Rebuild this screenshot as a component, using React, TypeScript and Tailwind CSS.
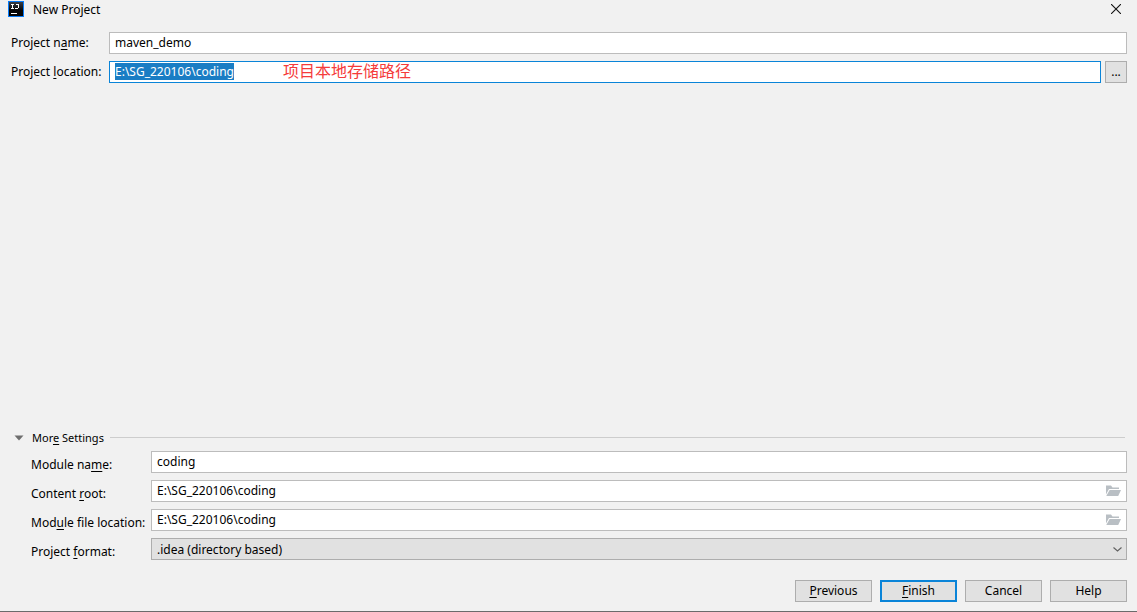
import { useEffect, useRef, useState } from "react";
import type { ReactNode } from "react";

const DEFAULT_PATH = "E:\\SG_220106\\coding";

function Mnemonic({ children }: { children: ReactNode }) {
  return <span className="underline underline-offset-2">{children}</span>;
}

function AppLogo() {
  return (
    <svg className="w-4 h-4" viewBox="0 0 16 16" shapeRendering="crispEdges">
      <defs>
        <linearGradient id="logo" x1="0" y1="0" x2="0" y2="1">
          <stop offset="0" stopColor="#3b3f45" />
          <stop offset="0.6" stopColor="#050505" />
        </linearGradient>
      </defs>
      <rect width="16" height="16" fill="#087cfa" />
      <rect x="1" y="1" width="14" height="14" fill="url(#logo)" />
      <path
        d="M3 3.5h3M4.5 3v5M3 7.5h3M8 3.5h3M10.5 3v4M7 7.5h3M3 12.5h6"
        fill="none"
        stroke="#ffffff"
        strokeWidth="1"
      />
    </svg>
  );
}

function FolderIcon() {
  return (
    <svg className="w-4 h-4" viewBox="0 0 16 16" fill="#b9bfc4">
      <path d="M1 2.5h5l1.5 2H14V6H4L1 11.5z" />
      <path d="M4.6 7H16l-2.8 6H1.3z" />
    </svg>
  );
}

interface PathFieldProps {
  id: string;
  value: string;
  onChange: (value: string) => void;
}

function PathField({ id, value, onChange }: PathFieldProps) {
  return (
    <div className="flex h-[22px] items-center border border-[#bcbcbc] bg-white pr-[5px]">
      <input
        id={id}
        value={value}
        onChange={(e) => onChange(e.target.value)}
        className="h-full min-w-0 flex-1 bg-transparent px-[5px] pb-px outline-none"
      />
      <button type="button" aria-label="Browse" className="flex-shrink-0">
        <FolderIcon />
      </button>
    </div>
  );
}

export default function App() {
  const [name, setName] = useState("maven_demo");
  const [location, setLocation] = useState(DEFAULT_PATH);
  const [moduleName, setModuleName] = useState("coding");
  const [contentRoot, setContentRoot] = useState(DEFAULT_PATH);
  const [moduleFile, setModuleFile] = useState(DEFAULT_PATH);
  const [open, setOpen] = useState(true);
  const locationRef = useRef<HTMLInputElement>(null);

  useEffect(() => {
    locationRef.current?.focus();
    locationRef.current?.select();
  }, []);

  const buttonClass = "h-[22px] w-[77px] border border-[#adadad] bg-[#e1e1e1] leading-4";

  return (
    <div className="flex min-h-screen flex-col border-b border-[#6b6b6b] bg-[#f1f1f1] font-['Noto_Sans','Noto_Sans_CJK_SC',sans-serif] text-[12px] leading-[17px] text-black">
      {/* Title bar */}
      <header className="flex h-[18px] items-center pl-2 pr-4">
        <AppLogo />
        <h1 className="ml-[9px] flex-1">New Project</h1>
        <button type="button" aria-label="Close">
          <svg className="h-[10px] w-[10px]" viewBox="0 0 10 10" stroke="#111111" strokeWidth="1.1">
            <path d="M0 0l10 10M10 0L0 10" />
          </svg>
        </button>
      </header>

      {/* Project fields */}
      <div className="mt-[14px] grid grid-cols-[98px_minmax(0,1fr)] items-center gap-y-[7px] pl-[11px] pr-[10px]">
        <label htmlFor="name" className="pb-px">
          Project n<Mnemonic>a</Mnemonic>me:
        </label>
        <input
          id="name"
          value={name}
          onChange={(e) => setName(e.target.value)}
          className="h-[22px] w-full border border-[#bcbcbc] bg-white px-[5px] pb-px outline-none"
        />
        <label htmlFor="location" className="whitespace-nowrap pb-px">
          Project <Mnemonic>l</Mnemonic>ocation:
        </label>
        <div className="flex gap-1">
          <div className="relative flex-1">
            <input
              id="location"
              ref={locationRef}
              value={location}
              onChange={(e) => setLocation(e.target.value)}
              className="block h-[22px] w-full border border-[#0a84d8] bg-white px-[5px] pb-px outline-none selection:bg-[#1a7dc4] selection:text-white"
            />
            <span className="pointer-events-none absolute left-[174px] top-0 text-[16px] leading-5 text-[#f53b3b]">
              项目本地存储路径
            </span>
          </div>
          <button type="button" className="h-[22px] w-[22px] border border-[#adadad] bg-[#e1e1e1] leading-4">
            ...
          </button>
        </div>
      </div>

      <div className="flex-1" />

      {/* More settings */}
      <div className="pl-[14px] pr-[10px]">
        <button
          type="button"
          aria-expanded={open}
          onClick={() => setOpen(!open)}
          className="flex h-[17px] w-full items-center pr-0.5"
        >
          <svg className="h-[6px] w-[10px]" viewBox="0 0 10 6" fill="#6e6e6e">
            <path d="M0.5 0.5h9L5 5.5z" />
          </svg>
          <span className="ml-2 mr-[6px] text-[11px]">
            Mor<Mnemonic>e</Mnemonic> Settings
          </span>
          <span className="h-px flex-1 bg-[#cdcdcd]" />
        </button>

        {open && (
          <div className="mt-[5px] grid grid-cols-[120px_minmax(0,1fr)] items-center gap-y-[7px] pl-[17px]">
            <label htmlFor="module" className="pt-1">
              Module na<Mnemonic>m</Mnemonic>e:
            </label>
            <input
              id="module"
              value={moduleName}
              onChange={(e) => setModuleName(e.target.value)}
              className="h-[22px] w-full border border-[#bcbcbc] bg-white px-[5px] pb-px outline-none"
            />
            <label htmlFor="root" className="pt-1">
              Content <Mnemonic>r</Mnemonic>oot:
            </label>
            <PathField id="root" value={contentRoot} onChange={setContentRoot} />
            <label htmlFor="file" className="whitespace-nowrap pt-1">
              Mod<Mnemonic>u</Mnemonic>le file location:
            </label>
            <PathField id="file" value={moduleFile} onChange={setModuleFile} />
            <label htmlFor="format" className="pt-1">
              Project <Mnemonic>f</Mnemonic>ormat:
            </label>
            <div className="relative">
              <select
                id="format"
                className="block h-[22px] w-full appearance-none border border-[#adadad] bg-[#e1e1e1] px-[5px] outline-none"
              >
                <option>.idea (directory based)</option>
                <option>.ipr (file based)</option>
              </select>
              <svg
                className="pointer-events-none absolute right-[5px] top-[9px] h-[5px] w-[9px]"
                viewBox="0 0 9 5"
                fill="none"
                stroke="#606060"
                strokeWidth="1.1"
              >
                <path d="M0.5 0.5l4 3.5l4 -3.5" />
              </svg>
            </div>
          </div>
        )}
      </div>

      {/* Dialog buttons */}
      <footer className="mt-5 mb-[9px] flex justify-end gap-2 pr-[10px]">
        <button type="button" className={buttonClass}>
          <Mnemonic>P</Mnemonic>revious
        </button>
        <button type="button" className="h-[22px] w-[77px] border-2 border-[#0a84d8] bg-[#e1e1e1] leading-4">
          <Mnemonic>F</Mnemonic>inish
        </button>
        <button type="button" className={buttonClass}>
          Cancel
        </button>
        <button type="button" className={buttonClass}>
          Help
        </button>
      </footer>
    </div>
  );
}
